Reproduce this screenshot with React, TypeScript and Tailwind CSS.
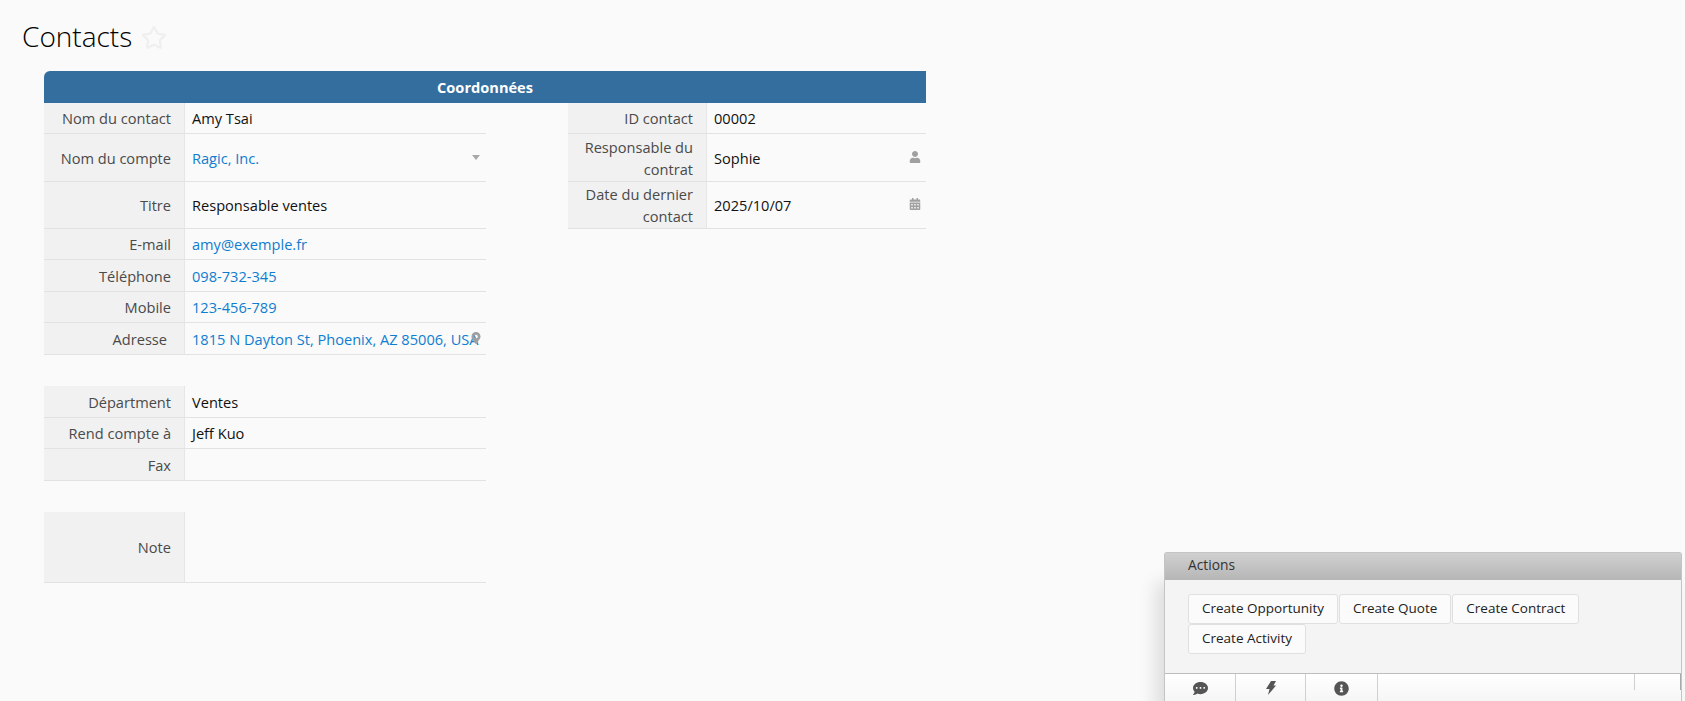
import React from 'react';
import { Star } from 'lucide-react';
import { FaCalendarAlt, FaCommentDots, FaInfoCircle, FaMapMarkerAlt, FaUser } from 'react-icons/fa';

type RowProps = {
  label: React.ReactNode;
  value?: string;
  link?: boolean;
  height: string;
  labelPad?: string;
  icon?: React.ReactNode;
};

function Row({ label, value, link, height, labelPad = 'pr-[13px]', icon }: RowProps) {
  return (
    <div className={`flex ${height} border-b border-[#e2e2e2] leading-[22px]`}>
      <div className={`flex w-[141px] shrink-0 items-center justify-end border-r border-[#e6e6e6] bg-[#f1f1f1] text-right text-[#4a4a4a] ${labelPad}`}>
        <span>{label}</span>
      </div>
      <div className={`relative flex min-w-0 flex-1 items-center whitespace-nowrap pl-[7px] ${link ? 'text-[#0f7dd0]' : 'text-[#111]'}`}>
        {value}
        {icon}
      </div>
    </div>
  );
}

export default function App() {
  return (
    <div className="relative h-[701px] w-full overflow-hidden bg-[#fafafa] font-['Open_Sans',sans-serif] text-[14.6px]">
      <div className="flex h-[71px] items-start pl-[22px] pt-[16px]">
        <h1 className="text-[28px] font-light leading-[40px] text-black">Contacts</h1>
        <Star size={26} strokeWidth={2} className="ml-[9px] mt-[9px] text-[#efefef]" />
      </div>

      <div className="ml-[44px] w-[882px]">
        <div className="flex h-[32px] items-center justify-center rounded-tl-[6px] bg-[#336e9e] pt-[1px] font-bold text-white">Coordonnées</div>

        <div className="flex items-start justify-between">
          <div className="w-[442px]">
            <Row label="Nom du contact" value="Amy Tsai" height="h-[31px]" />
            <Row
              label="Nom du compte"
              value="Ragic, Inc."
              link
              height="h-[48px]"
              icon={<span className="absolute right-[6px] top-[21px] h-0 w-0 border-x-[4px] border-t-[5px] border-x-transparent border-t-[#a8a8a8]" />}
            />
            <Row label="Titre" value="Responsable ventes" height="h-[47px]" />
            <Row label="E-mail" value="amy@exemple.fr" link height="h-[31px]" />
            <Row label="Téléphone" value="098-732-345" link height="h-[32px]" />
            <Row label="Mobile" value="123-456-789" link height="h-[31px]" />
            <Row
              label="Adresse"
              value="1815 N Dayton St, Phoenix, AZ 85006, USA"
              link
              height="h-[32px]"
              labelPad="pr-[17px]"
              icon={<FaMapMarkerAlt size={12} className="absolute right-[4px] top-[9px] text-[#a0a0a0]" />}
            />

            <div className="mt-[31px]">
              <Row label="Départment" value="Ventes" height="h-[32px]" />
              <Row label="Rend compte à" value="Jeff Kuo" height="h-[31px]" />
              <Row label="Fax" height="h-[32px]" />
            </div>

            <div className="mt-[31px]">
              <Row label="Note" height="h-[71px]" />
            </div>
          </div>

          <div className="w-[358px] [&>div>div:first-child]:w-[139px]">
            <Row label="ID contact" value="00002" height="h-[31px]" />
            <Row
              label={<>Responsable du<br />contrat</>}
              value="Sophie"
              height="h-[48px]"
              icon={<FaUser size={12} className="absolute right-[5px] top-[17px] text-[#a0a0a0]" />}
            />
            <Row
              label={<>Date du dernier<br />contact</>}
              value="2025/10/07"
              height="h-[47px]"
              icon={<FaCalendarAlt size={12} className="absolute right-[5px] top-[16px] text-[#a0a0a0]" />}
            />
          </div>
        </div>
      </div>

      {/* floating actions panel */}
      <div className="absolute left-[1164px] top-[552px] h-[149px] w-[518px] rounded-t-[3px] border-x border-t border-[#c4c4c4] bg-[#f4f4f4] shadow-[-8px_30px_18px_rgba(0,0,0,0.12)]">
        <div className="h-[27px] bg-gradient-to-b from-[#d0d0d0] to-[#b6b6b6] pl-[23px] text-[13.8px] leading-[23px] text-[#333]">Actions</div>
        <div className="flex h-[93px] flex-wrap content-start pl-[23px] pr-[90px] pt-[14px]">
          {['Create Opportunity', 'Create Quote', 'Create Contract', 'Create Activity'].map((name) => (
            <button key={name} className="mr-[1px] h-[30px] rounded-[3px] border border-[#e0e0e0] bg-[#fbfbfb] px-[13px] pb-[2px] text-[13.5px] text-[#222]">
              {name}
            </button>
          ))}
        </div>
        <div className="flex h-[28px] border-t border-[#bdbdbd] bg-gradient-to-b from-white to-[#f6f6f6] text-[#555]">
          <div className="flex w-[71px] justify-center border-r border-[#d0d0d0] pt-[7px]"><FaCommentDots size={15} /></div>
          <div className="flex w-[70px] justify-center border-r border-[#d0d0d0] pt-[7px]">
            <svg width="11" height="14" viewBox="0 0 11 14" fill="currentColor"><polygon points="6,0 11,0 8.5,4.5 11,4.5 3,14 4.5,8 1,8" /></svg>
          </div>
          <div className="flex w-[72px] justify-center border-r border-[#d0d0d0] pt-[7px]"><FaInfoCircle size={15} /></div>
          <div className="flex-1" />
          <div className="mb-[11px] w-[47px] border-l border-r border-l-[#d0d0d0] border-r-[#a8a8a8]" />
        </div>
      </div>
    </div>
  );
}
